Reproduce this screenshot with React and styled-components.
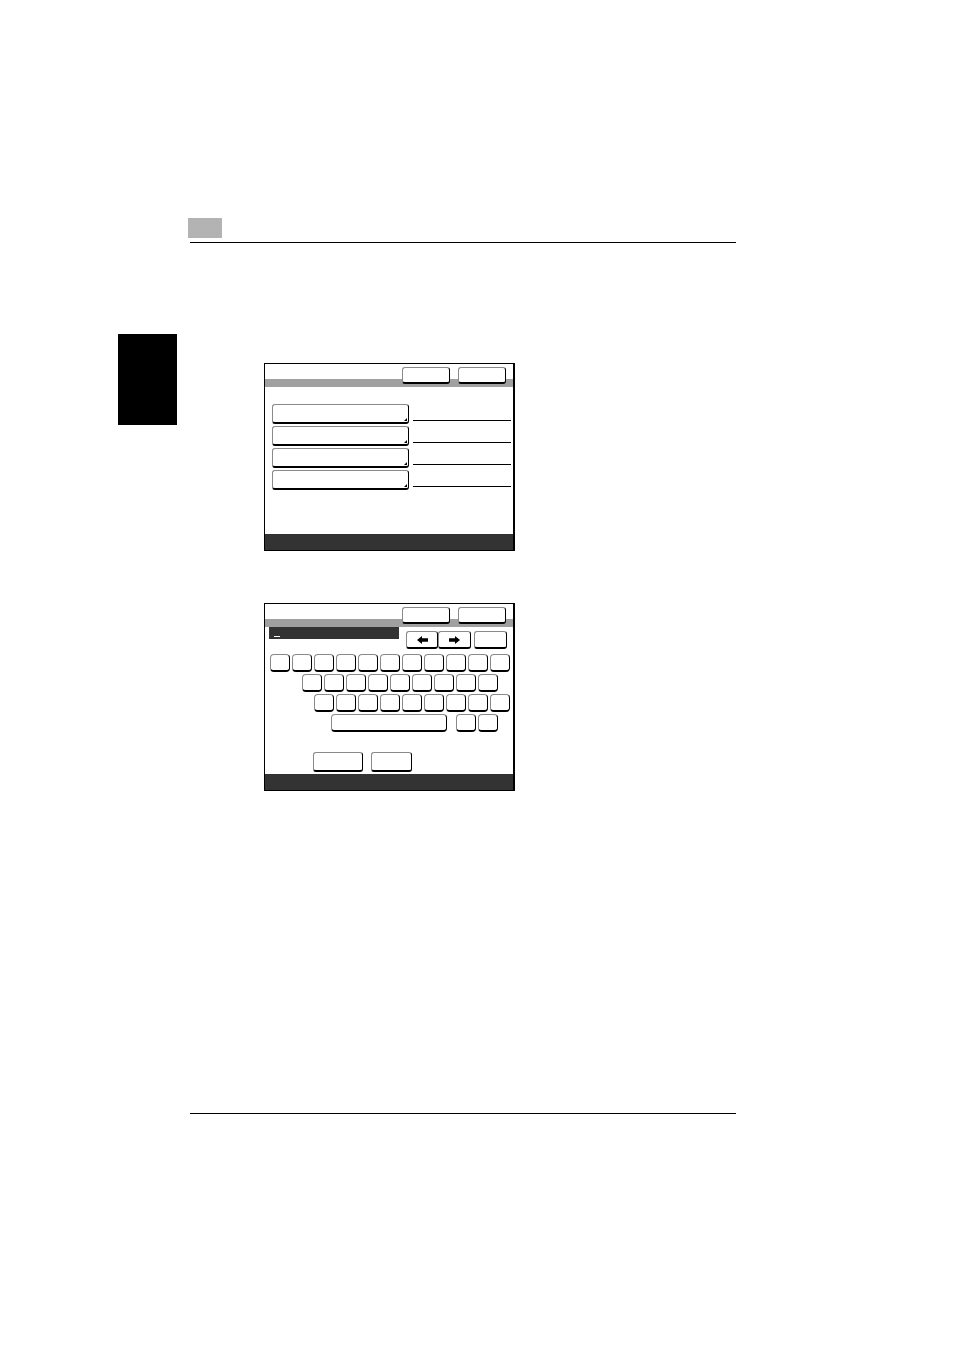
import React from 'react';
import styled, { createGlobalStyle } from 'styled-components';

const GlobalStyle = createGlobalStyle`
  html, body {
    margin: 0;
    padding: 0;
    background: #fff;
    font-family: "Liberation Sans", Arial, sans-serif;
  }
`;

const Page = styled.div`
  width: 954px;
  min-height: 1350px;
  padding-top: 218px;
  box-sizing: border-box;
  display: flex;
  flex-direction: column;
`;

const ChapterBox = styled.div`
  margin-left: 188px;
  width: 34px;
  height: 20px;
  background: #b3b3b3;
`;

const Rule = styled.div`
  margin-left: 190px;
  margin-top: ${p => p.$top || 0}px;
  width: 546px;
  height: 1px;
  background: #000;
`;

const Body = styled.div`
  display: flex;
  margin-left: 118px;
`;

const SideTab = styled.div`
  width: 59px;
  height: 91px;
  margin-top: 91px;
  background: #000;
`;

const Figures = styled.div`
  margin-left: 87px;
  padding-top: 120px;
  display: flex;
  flex-direction: column;
  gap: 52px;
`;

const Screen = styled.div`
  width: 251px;
  height: 188px;
  box-sizing: border-box;
  border: 1px solid #000;
  border-right-width: 2px;
  display: flex;
  flex-direction: column;
  background: #fff;
`;

const TitleBar = styled.div`
  height: 23px;
  box-sizing: border-box;
  padding: 3px 7px 0 0;
  display: flex;
  justify-content: flex-end;
  align-items: flex-start;
  gap: 8px;
  background: linear-gradient(to bottom, #fff 15px, #a0a0a0 15px);
`;

const Btn = styled.div`
  box-sizing: border-box;
  width: ${p => p.$w}px;
  height: ${p => p.$h || 17}px;
  border: 1px solid #8a8a8a;
  border-right-color: #000;
  border-bottom: 2px solid #000;
  border-radius: 3px;
  background: #fff;
  display: flex;
  align-items: center;
  justify-content: center;
`;

const StatusBar = styled.div`
  margin-top: auto;
  height: 16px;
  background: #333;
`;

const MenuList = styled.div`
  padding: 17px 0 0 7px;
  display: flex;
  flex-direction: column;
  gap: 2px;
`;

const MenuRow = styled.div`
  display: flex;
  align-items: flex-end;
`;

const MenuBtn = styled(Btn)`
  justify-content: flex-end;
  align-items: flex-end;
  padding: 0 1px 1px 0;
`;

const Corner = styled.span`
  width: 0;
  height: 0;
  border-left: 3px solid transparent;
  border-bottom: 3px solid #000;
`;

const ValueLine = styled.div`
  margin: 0 0 3px 4px;
  width: 98px;
  height: 1px;
  background: #000;
`;

const InputRow = styled.div`
  display: flex;
  align-items: flex-start;
  padding-left: 4px;
`;

const InputField = styled.div`
  width: 130px;
  height: 12px;
  box-sizing: border-box;
  background: #333;
  display: flex;
  align-items: flex-end;
  padding: 0 0 2px 5px;
`;

const Cursor = styled.span`
  width: 6px;
  height: 1px;
  background: #fff;
`;

const ArrowGroup = styled.div`
  display: flex;
  margin: 4px 0 0 7px;
`;

const Keyboard = styled.div`
  margin-top: 5px;
  display: flex;
  flex-direction: column;
  gap: 2px;
`;

const KeyRow = styled.div`
  display: flex;
  gap: 2px;
  margin-left: ${p => p.$indent}px;
`;

const Key = styled(Btn)`
  border-radius: 4px;
`;

const Spacer = styled.div`
  width: ${p => p.$w}px;
`;

const ActionRow = styled.div`
  display: flex;
  gap: 8px;
  margin: 20px 0 0 48px;
`;

const Arrow = ({ dir }) => (
  <svg width="11" height="8" viewBox="0 0 11 8" style={{ transform: dir === 'right' ? 'scaleX(-1)' : 'none' }}>
    <path d="M0 4 L5 0 L5 2.3 L11 2.3 L11 5.7 L5 5.7 L5 8 Z" fill="#000" />
  </svg>
);

const keys = n => Array.from({ length: n }, (_, i) => <Key key={i} $w={20} $h={18} />);

const MenuScreen = () => (
  <Screen>
    <TitleBar>
      <Btn $w={48} />
      <Btn $w={48} />
    </TitleBar>
    <MenuList>
      {[0, 1, 2, 3].map(i => (
        <MenuRow key={i}>
          <MenuBtn $w={137} $h={20}>
            <Corner />
          </MenuBtn>
          <ValueLine />
        </MenuRow>
      ))}
    </MenuList>
    <StatusBar />
  </Screen>
);

const KeyboardScreen = () => (
  <Screen>
    <TitleBar>
      <Btn $w={48} />
      <Btn $w={48} />
    </TitleBar>
    <InputRow>
      <InputField>
        <Cursor />
      </InputField>
      <ArrowGroup>
        <Btn $w={32} $h={18}><Arrow dir="left" /></Btn>
        <Btn $w={33} $h={18}><Arrow dir="right" /></Btn>
        <Spacer $w={3} />
        <Btn $w={33} $h={18} />
      </ArrowGroup>
    </InputRow>
    <Keyboard>
      <KeyRow $indent={5}>{keys(11)}</KeyRow>
      <KeyRow $indent={37}>{keys(9)}</KeyRow>
      <KeyRow $indent={49}>{keys(9)}</KeyRow>
      <KeyRow $indent={66}>
        <Key $w={116} $h={18} />
        <Spacer $w={5} />
        <Key $w={20} $h={18} />
        <Key $w={20} $h={18} />
      </KeyRow>
    </Keyboard>
    <ActionRow>
      <Btn $w={50} $h={20} />
      <Btn $w={41} $h={20} />
    </ActionRow>
    <StatusBar />
  </Screen>
);

export default function App() {
  return (
    <>
      <GlobalStyle />
      <Page>
        <ChapterBox />
        <Rule $top={4} />
        <Body>
          <SideTab />
          <Figures>
            <MenuScreen />
            <KeyboardScreen />
          </Figures>
        </Body>
        <Rule $top={322} />
      </Page>
    </>
  );
}
